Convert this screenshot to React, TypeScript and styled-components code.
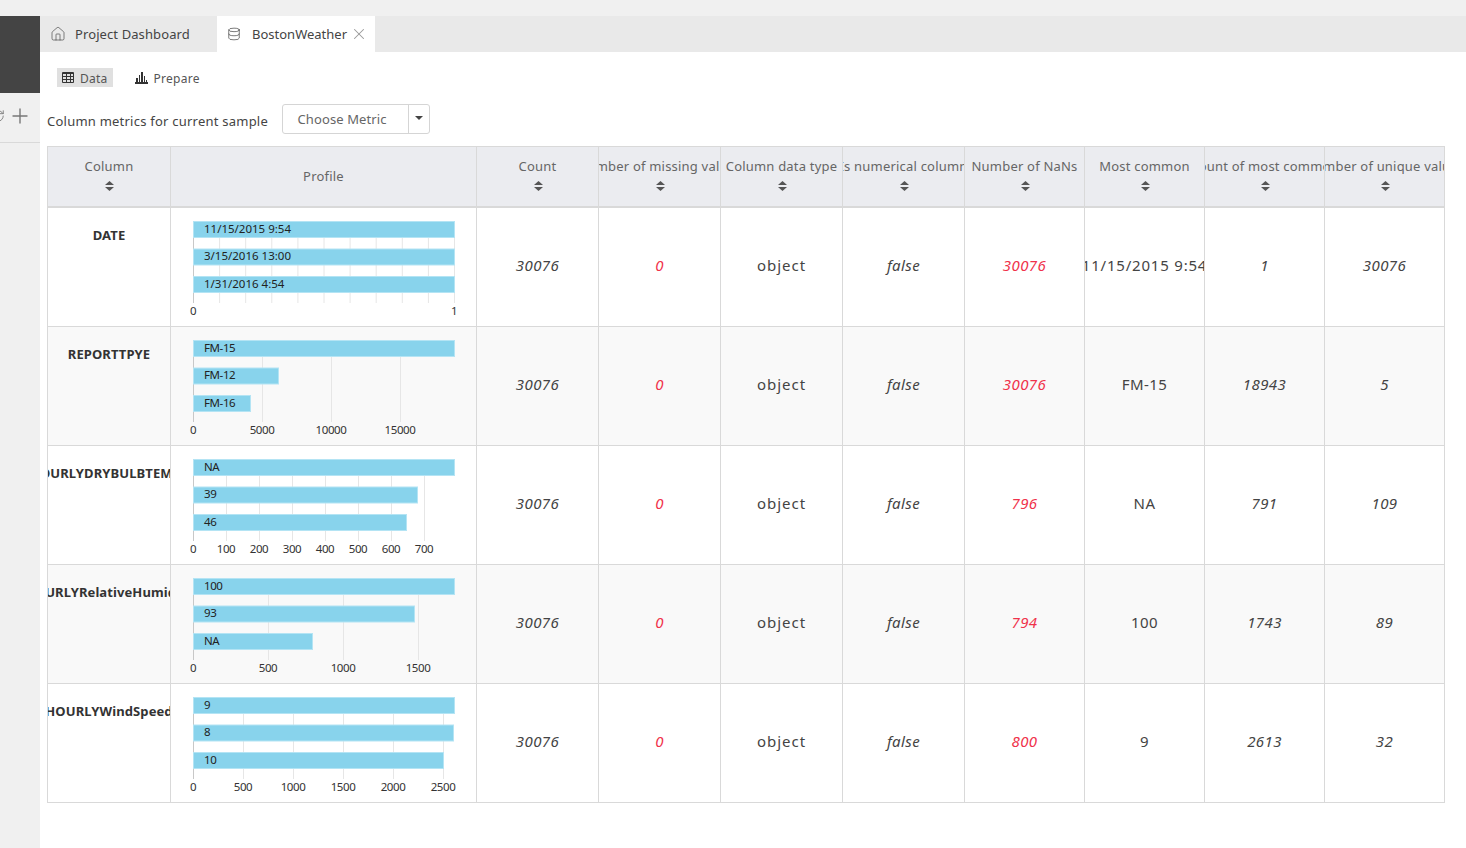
import { createGlobalStyle, styled } from 'styled-components';
import { Database, Home, Plus, RefreshCw, X } from 'lucide-react';

const GlobalStyle = createGlobalStyle`
  html, body {
    margin: 0;
    height: 100%;
    overflow: hidden;
    background: #fff;
    font-family: "Noto Sans", "Open Sans", sans-serif;
  }
`;

const Page = styled.div`
  display: flex;
  flex-direction: column;
  height: 848px;
`;

const TopStrip = styled.div`
  height: 16px;
  flex: none;
  background: #f0f0f0;
`;

const Body = styled.div`
  display: flex;
  flex: 1;
  min-height: 0;
`;

const Sidebar = styled.aside`
  width: 40px;
  flex: none;
  background: #f0f0f0;
`;

const SidebarLogo = styled.div`
  height: 77px;
  background: #444;
`;

const SidebarActions = styled.div`
  height: 50px;
  box-sizing: border-box;
  border-bottom: 1px solid #d9d9d9;
  display: flex;
  justify-content: flex-end;
  align-items: center;
  gap: 3px;
  padding: 0 8px 3px 0;
  overflow: hidden;
  color: #777;
  svg {
    flex: none;
  }
`;

const Main = styled.main`
  flex: 1;
  min-width: 0;
`;

const TabBar = styled.div`
  display: flex;
  height: 36px;
  background: #e9e9e9;
`;

const Tab = styled.div<{ $active?: boolean; $width: number }>`
  width: ${p => p.$width}px;
  box-sizing: border-box;
  display: flex;
  align-items: center;
  padding-left: 10px;
  background: ${p => (p.$active ? '#fff' : 'transparent')};
  color: #444;
  font-size: 13px;
`;

const TabLabel = styled.span<{ $gap: number; $spacing: number }>`
  margin-left: ${p => p.$gap}px;
  letter-spacing: ${p => p.$spacing}px;
`;

const TabClose = styled(X)`
  margin-left: 3px;
  color: #999;
`;

const SubNav = styled.div`
  display: flex;
  align-items: center;
  height: 19px;
  margin: 16px 0 17px 17px;
  gap: 17px;
`;

const SubNavItem = styled.div<{ $active?: boolean }>`
  display: flex;
  align-items: center;
  gap: 6px;
  height: 19px;
  padding: 0 5px;
  background: ${p => (p.$active ? '#e0e0e0' : 'transparent')};
  color: #555;
  font-size: 12px;
  line-height: 21px;
  letter-spacing: 0.25px;
`;

const SubNavText = styled.span`
  padding-top: 1px;
`;

const MetricsRow = styled.div`
  display: flex;
  align-items: flex-end;
  margin: 0 0 12px 7px;
  gap: 14px;
`;

const MetricsLabel = styled.span`
  color: #444;
  font-size: 13px;
  line-height: 18px;
  margin-bottom: 4px;
  letter-spacing: 0.23px;
`;

const MetricSelect = styled.div`
  display: flex;
  width: 148px;
  height: 30px;
  box-sizing: border-box;
  border: 1px solid #d5d5d5;
  border-radius: 3px;
  color: #666;
  font-size: 13px;
`;

const MetricValue = styled.div`
  flex: 1;
  display: flex;
  align-items: center;
  justify-content: center;
  padding-right: 7px;
  letter-spacing: 0.1px;
`;

const MetricCaret = styled.div`
  width: 21px;
  border-left: 1px solid #d5d5d5;
  display: flex;
  justify-content: center;
  padding-top: 11px;
  box-sizing: border-box;
  &::after {
    content: '';
    width: 0;
    height: 0;
    border-left: 4px solid transparent;
    border-right: 4px solid transparent;
    border-top: 4px solid #444;
  }
`;

const Table = styled.div`
  width: 1398px;
  margin-left: 7px;
  box-sizing: border-box;
  border-top: 1px solid #d9d9d9;
  border-left: 1px solid #d9d9d9;
`;

const COLUMNS = '123px 306px repeat(4, 122px) repeat(4, 120px)';

const HeaderRow = styled.div`
  display: grid;
  grid-template-columns: ${COLUMNS};
  height: 61px;
  box-sizing: border-box;
  background: #ebecf0;
  border-bottom: 2px solid #d9d9d9;
`;

const DataRow = styled.div<{ $odd: boolean }>`
  display: grid;
  grid-template-columns: ${COLUMNS};
  height: 119px;
  box-sizing: border-box;
  background: ${p => (p.$odd ? '#f9f9f9' : '#fff')};
  border-bottom: 1px solid #d9d9d9;
`;

const HeaderCell = styled.div<{ $sortable: boolean }>`
  border-right: 1px solid #d9d9d9;
  overflow: hidden;
  display: flex;
  flex-direction: column;
  align-items: center;
  justify-content: ${p => (p.$sortable ? 'flex-start' : 'center')};
  padding: ${p => (p.$sortable ? '10px 0 0' : '0 0 2px')};
  color: #666;
  font-size: 13px;
  line-height: 18px;
  letter-spacing: 0.2px;
  white-space: nowrap;
`;

const SortIcon = styled.svg`
  flex: none;
  margin: 6px 0 0 1px;
`;

const Cell = styled.div`
  border-right: 1px solid #d9d9d9;
  overflow: hidden;
  display: flex;
  align-items: center;
  justify-content: center;
  white-space: nowrap;
`;

const NameCell = styled(Cell)`
  align-items: flex-start;
  padding-top: 18px;
  color: #333;
  font-size: 13px;
  font-weight: 700;
  line-height: 18px;
  letter-spacing: 0.1px;
`;

const ProfileCell = styled(Cell)`
  display: block;
`;

const ValueCell = styled(Cell)<{ $italic?: boolean; $danger?: boolean; $spacing?: number }>`
  padding-bottom: 4px;
  color: ${p => (p.$danger ? '#f0324b' : '#444')};
  font-size: 15px;
  font-style: ${p => (p.$italic ? 'italic' : 'normal')};
  letter-spacing: ${p => p.$spacing ?? 0.4}px;
`;

const ChartSvg = styled.svg`
  display: block;
  font-family: "Noto Sans", sans-serif;
  font-size: 11.5px;
  letter-spacing: -0.4px;
`;

const BarLabel = styled.text<{ $date: boolean }>`
  fill: #222;
  letter-spacing: ${p => (p.$date ? '0' : '-0.4px')};
`;

type Bar = { label: string; width: number };
type Tick = { x: number; label?: string };
type Row = {
  name: string;
  bars: Bar[];
  ticks: Tick[];
  nans: string;
  common: string;
  commonCount: string;
  unique: string;
};

const CHART_LEFT = 22;
const BAR_TOPS = [13, 40.5, 68];

const labelled = (step: number, labels: string[]): Tick[] =>
  labels.map((label, i) => ({ x: i * step, label }));

const rows: Row[] = [
  {
    name: 'DATE',
    bars: [
      { label: '11/15/2015 9:54', width: 262 },
      { label: '3/15/2016 13:00', width: 262 },
      { label: '1/31/2016 4:54', width: 262 },
    ],
    ticks: Array.from({ length: 11 }, (_, i) => ({
      x: i * 26.1,
      label: i === 0 ? '0' : i === 10 ? '1' : undefined,
    })),
    nans: '30076',
    common: '11/15/2015 9:54',
    commonCount: '1',
    unique: '30076',
  },
  {
    name: 'REPORTTPYE',
    bars: [
      { label: 'FM-15', width: 262 },
      { label: 'FM-12', width: 86 },
      { label: 'FM-16', width: 58 },
    ],
    ticks: labelled(69, ['0', '5000', '10000', '15000']),
    nans: '30076',
    common: 'FM-15',
    commonCount: '18943',
    unique: '5',
  },
  {
    name: 'HOURLYDRYBULBTEMPF',
    bars: [
      { label: 'NA', width: 262 },
      { label: '39', width: 225 },
      { label: '46', width: 214 },
    ],
    ticks: labelled(33, ['0', '100', '200', '300', '400', '500', '600', '700']),
    nans: '796',
    common: 'NA',
    commonCount: '791',
    unique: '109',
  },
  {
    name: 'HOURLYRelativeHumidity',
    bars: [
      { label: '100', width: 262 },
      { label: '93', width: 222 },
      { label: 'NA', width: 120 },
    ],
    ticks: labelled(75, ['0', '500', '1000', '1500']),
    nans: '794',
    common: '100',
    commonCount: '1743',
    unique: '89',
  },
  {
    name: 'HOURLYWindSpeed',
    bars: [
      { label: '9', width: 262 },
      { label: '8', width: 261 },
      { label: '10', width: 251 },
    ],
    ticks: labelled(50, ['0', '500', '1000', '1500', '2000', '2500']),
    nans: '800',
    common: '9',
    commonCount: '2613',
    unique: '32',
  },
];

const headers: { title: string; sortable: boolean }[] = [
  { title: 'Column', sortable: true },
  { title: 'Profile', sortable: false },
  { title: 'Count', sortable: true },
  { title: 'Number of missing values', sortable: true },
  { title: 'Column data type', sortable: true },
  { title: 'Is numerical column', sortable: true },
  { title: 'Number of NaNs', sortable: true },
  { title: 'Most common', sortable: true },
  { title: 'Count of most common', sortable: true },
  { title: 'Number of unique values', sortable: true },
];

function Sort() {
  return (
    <SortIcon width="9" height="10" viewBox="0 0 9 10">
      <path d="M4.5 0 9 4H0Z M0 6h9L4.5 10Z" fill="#555" />
    </SortIcon>
  );
}

function GridIcon() {
  return (
    <svg width="12" height="11" viewBox="0 0 12 11" fill="none" stroke="#333">
      <path d="M.5.5h11v10H.5Z" />
      <path d="M.5 1.5h11M.5 4.5h11M.5 7.5h11M4.5 1.5v9M8.5 1.5v9" />
    </svg>
  );
}

function PrepareIcon() {
  return (
    <svg width="13" height="12" viewBox="0 0 13 12" fill="#333">
      <rect x="1" y="6" width="2" height="5" />
      <rect x="4" y="3" width="1" height="8" />
      <rect x="6" y="0" width="2" height="11" />
      <rect x="9" y="4" width="1" height="7" />
      <rect x="11" y="8" width="1" height="3" />
      <rect x="0" y="10" width="13" height="2" />
    </svg>
  );
}

function Chart({ bars, ticks }: { bars: Bar[]; ticks: Tick[] }) {
  return (
    <ChartSvg width="305" height="118" viewBox="0 0 305 118">
      {ticks.map(tick => (
        <line
          key={tick.x}
          x1={CHART_LEFT + tick.x + 0.5}
          x2={CHART_LEFT + tick.x + 0.5}
          y1="13"
          y2="95"
          stroke={tick.x === 0 ? '#c8c8c8' : '#e6e6e6'}
        />
      ))}
      {bars.map((bar, i) => (
        <g key={bar.label}>
          <rect
            x={CHART_LEFT + 0.5}
            y={BAR_TOPS[i] + 0.5}
            width={bar.width - 1}
            height="16"
            fill="#88d3ec"
            stroke="#b4e4f4"
          />
          <BarLabel
            x={CHART_LEFT + 11}
            y={BAR_TOPS[i] + 11.5}
            $date={bar.label.includes('/')}
          >
            {bar.label}
          </BarLabel>
        </g>
      ))}
      {ticks
        .filter(tick => tick.label)
        .map(tick => (
          <text key={tick.x} x={CHART_LEFT + tick.x} y="107" textAnchor="middle" fill="#333">
            {tick.label}
          </text>
        ))}
    </ChartSvg>
  );
}

export default function App() {
  return (
    <Page>
      <GlobalStyle />
      <TopStrip />
      <Body>
        <Sidebar>
          <SidebarLogo />
          <SidebarActions>
            <RefreshCw size={14} strokeWidth={1.5} />
            <Plus size={24} strokeWidth={1.4} />
          </SidebarActions>
        </Sidebar>
        <Main>
          <TabBar>
            <Tab $width={177}>
              <Home size={16} strokeWidth={1} />
              <TabLabel $gap={9} $spacing={0.1}>Project Dashboard</TabLabel>
            </Tab>
            <Tab $width={158} $active>
              <Database size={14} strokeWidth={1.2} />
              <TabLabel $gap={11} $spacing={0}>BostonWeather</TabLabel>
              <TabClose size={18} strokeWidth={1.4} />
            </Tab>
          </TabBar>
          <SubNav>
            <SubNavItem $active>
              <GridIcon />
              <SubNavText>Data</SubNavText>
            </SubNavItem>
            <SubNavItem>
              <PrepareIcon />
              <SubNavText>Prepare</SubNavText>
            </SubNavItem>
          </SubNav>
          <MetricsRow>
            <MetricsLabel>Column metrics for current sample</MetricsLabel>
            <MetricSelect>
              <MetricValue>Choose Metric</MetricValue>
              <MetricCaret />
            </MetricSelect>
          </MetricsRow>
          <Table>
            <HeaderRow>
              {headers.map(header => (
                <HeaderCell key={header.title} $sortable={header.sortable}>
                  {header.title}
                  {header.sortable && <Sort />}
                </HeaderCell>
              ))}
            </HeaderRow>
            {rows.map((row, i) => (
              <DataRow key={row.name} $odd={i % 2 === 1}>
                <NameCell>{row.name}</NameCell>
                <ProfileCell>
                  <Chart bars={row.bars} ticks={row.ticks} />
                </ProfileCell>
                <ValueCell $italic>30076</ValueCell>
                <ValueCell $italic $danger>0</ValueCell>
                <ValueCell $spacing={1}>object</ValueCell>
                <ValueCell $italic>false</ValueCell>
                <ValueCell $italic $danger>{row.nans}</ValueCell>
                <ValueCell $spacing={row.common.includes('/') ? 0.8 : 0.4}>{row.common}</ValueCell>
                <ValueCell $italic>{row.commonCount}</ValueCell>
                <ValueCell $italic>{row.unique}</ValueCell>
              </DataRow>
            ))}
          </Table>
        </Main>
      </Body>
    </Page>
  );
}
